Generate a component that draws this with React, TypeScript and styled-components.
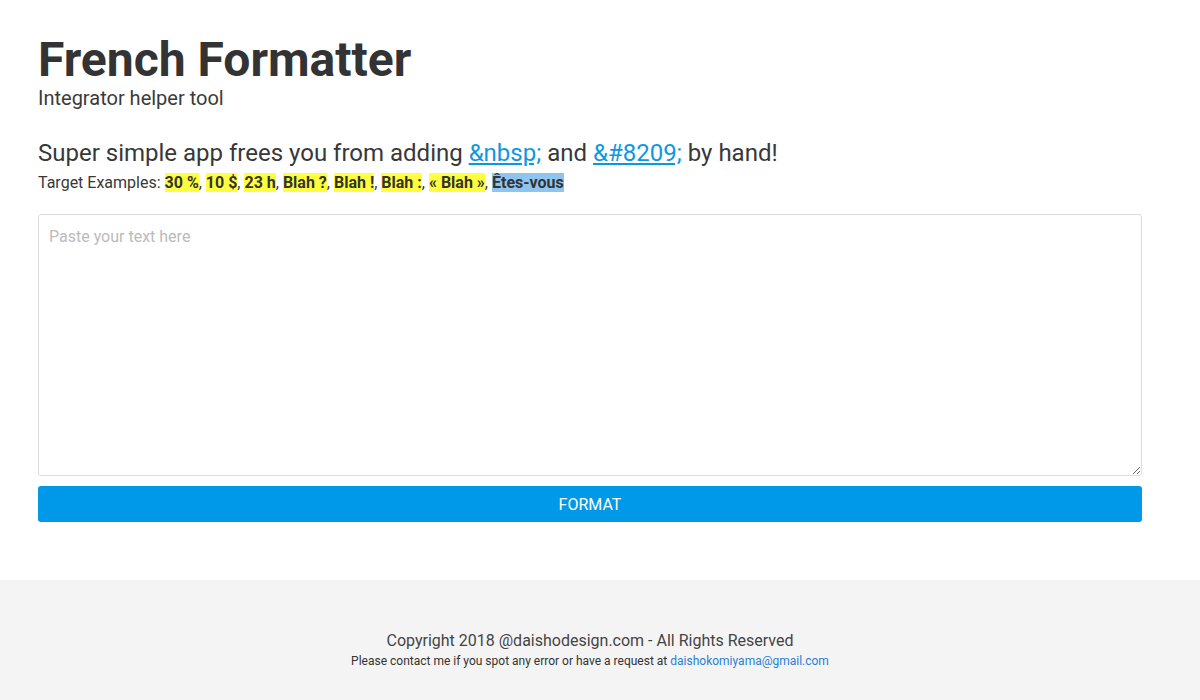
import React from "react";
import styled, { createGlobalStyle } from "styled-components";

const Global = createGlobalStyle`
  html, body { margin: 0; padding: 0; background: #fff; }
  body { font-family: Roboto, "Liberation Sans", sans-serif; color: #333; }
  * { box-sizing: border-box; }
`;

const Page = styled.div`
  display: flex;
  flex-direction: column;
  min-height: 700px;
`;

const Main = styled.main`
  width: 1104px;
  margin-left: 38px;
  padding-top: 34px;
  padding-bottom: 58px;
`;

const Title = styled.h1`
  margin: 0;
  font-size: 48px;
  line-height: 52px;
  font-weight: 700;
  color: #333;
`;

const Subtitle = styled.p`
  margin: 0;
  font-size: 20px;
  line-height: 24px;
  color: #3a3a3a;
`;

const Lead = styled.p`
  margin: 28px 0 0;
  font-size: 24px;
  line-height: 30px;
  color: #383838;
`;

const Link = styled.a`
  color: #0d97e2;
  text-decoration: underline;
`;

const Examples = styled.p`
  margin: 5px 0 0;
  font-size: 16px;
  line-height: 20px;
  color: #383838;
`;

const Mark = styled.strong<{ $blue?: boolean }>`
  font-weight: 700;
  background: ${(p) => (p.$blue ? "#8ec5ee" : "#ffff3f")};
  color: #333;
`;

const TextArea = styled.textarea`
  display: block;
  width: 100%;
  height: 262px;
  margin-top: 21px;
  padding: 12px 10px;
  border: 1px solid #ddd;
  border-radius: 3px;
  font-family: Roboto, "Liberation Sans", sans-serif;
  font-size: 16px;
  color: #333;
  resize: vertical;
  outline: none;
  &::placeholder { color: #bbb; }
`;

const Button = styled.button`
  display: block;
  width: 100%;
  height: 36px;
  margin-top: 10px;
  border: none;
  border-radius: 3px;
  background: #0098e9;
  color: #fff;
  font-family: Roboto, "Liberation Sans", sans-serif;
  font-size: 16px;
  cursor: pointer;
`;

const Footer = styled.footer`
  flex: 1;
  background: #f4f4f4;
  display: flex;
  flex-direction: column;
  align-items: center;
  padding: 51px 20px 0 0;
`;

const Copy = styled.p`
  margin: 0;
  font-size: 16px;
  line-height: 20px;
  color: #444;
`;

const Contact = styled.p`
  margin: 1px 0 0;
  font-size: 12px;
  line-height: 18px;
  color: #333;
`;

const MailLink = styled.a`
  color: #2a7fd4;
  text-decoration: none;
`;

export default function App() {
  return (
    <Page>
      <Global />
      <Main>
        <Title>French Formatter</Title>
        <Subtitle>Integrator helper tool</Subtitle>
        <Lead>
          Super simple app frees you from adding <Link href="#">&amp;nbsp;</Link> and{" "}
          <Link href="#">&amp;#8209;</Link> by hand!
        </Lead>
        <Examples>
          Target Examples: <Mark>30&nbsp;%</Mark>, <Mark>10&nbsp;$</Mark>, <Mark>23&nbsp;h</Mark>,{" "}
          <Mark>Blah&nbsp;?</Mark>, <Mark>Blah&nbsp;!</Mark>, <Mark>Blah&nbsp;:</Mark>,{" "}
          <Mark>«&nbsp;Blah&nbsp;»</Mark>, <Mark $blue>Êtes‑vous</Mark>
        </Examples>
        <TextArea placeholder="Paste your text here" />
        <Button>FORMAT</Button>
      </Main>
      <Footer>
        <Copy>Copyright 2018 @daishodesign.com - All Rights Reserved</Copy>
        <Contact>
          Please contact me if you spot any error or have a request at{" "}
          <MailLink href="#">daishokomiyama@gmail.com</MailLink>
        </Contact>
      </Footer>
    </Page>
  );
}
